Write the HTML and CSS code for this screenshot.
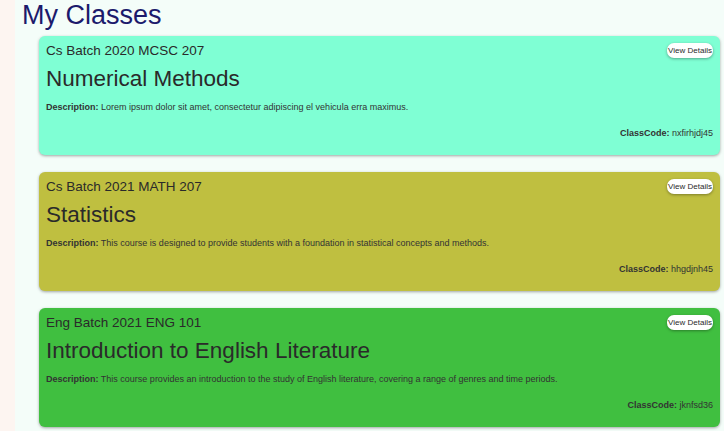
FILE: index.html
```html
<!DOCTYPE html>
<html lang="en">
<head>
<meta charset="utf-8">
<title>My Classes</title>
<link rel="stylesheet" href="styles.css">
</head>
<body>
<main class="main">
  <h1 class="page-title">My Classes</h1>
  <section class="cards">
    <article class="card card-aqua">
      <div class="card-head">
        <div class="card-sub">Cs Batch 2020 MCSC 207</div>
        <button class="btn">View Details</button>
      </div>
      <h2 class="card-title">Numerical Methods</h2>
      <p class="card-desc"><b>Description:</b> Lorem ipsum dolor sit amet, consectetur adipiscing el vehicula erra maximus.</p>
      <p class="card-code"><b>ClassCode:</b> nxfirhjdj45</p>
    </article>
    <article class="card card-olive">
      <div class="card-head">
        <div class="card-sub">Cs Batch 2021 MATH 207</div>
        <button class="btn">View Details</button>
      </div>
      <h2 class="card-title">Statistics</h2>
      <p class="card-desc"><b>Description:</b> This course is designed to provide students with a foundation in statistical concepts and methods.</p>
      <p class="card-code"><b>ClassCode:</b> hhgdjnh45</p>
    </article>
    <article class="card card-green">
      <div class="card-head">
        <div class="card-sub">Eng Batch 2021 ENG 101</div>
        <button class="btn">View Details</button>
      </div>
      <h2 class="card-title">Introduction to English Literature</h2>
      <p class="card-desc"><b>Description:</b> This course provides an introduction to the study of English literature, covering a range of genres and time periods.</p>
      <p class="card-code"><b>ClassCode:</b> jknfsd36</p>
    </article>
  </section>
</main>
</body>
</html>
```

FILE: styles.css
```css
html, body {
  margin: 0;
  padding: 0;
}
body {
  background: #fdf5f1;
  font-family: "Liberation Sans", Arial, sans-serif;
  color: #2a2a2a;
  height: 431px;
  overflow: hidden;
}
.main {
  margin-left: 15px;
  background: #f4fdf9;
  min-height: 431px;
  padding: 0 4px 0 7px;
}
.page-title {
  margin: 0 0 5px 0;
  font-size: 27px;
  line-height: 31px;
  font-weight: normal;
  color: #1c1a6c;
}
.cards {
  display: flex;
  flex-direction: column;
  gap: 17px;
  padding-left: 17px;
}
.card {
  height: 119px;
  box-sizing: border-box;
  border-radius: 6px;
  padding: 7px 7px 0 7px;
  box-shadow: 0 1px 3px rgba(0, 0, 0, 0.35);
  display: flex;
  flex-direction: column;
}
.card-aqua { background: #7fffd4; }
.card-olive { background: #bfbf40; }
.card-green { background: #40bf40; }
.card-head {
  display: flex;
  justify-content: space-between;
  align-items: flex-start;
}
.card-sub {
  font-size: 13.5px;
  line-height: 16px;
  color: #2a2a2a;
}
.btn {
  font-family: "Liberation Sans", Arial, sans-serif;
  font-size: 8px;
  color: #2a2a2a;
  background: #fff;
  border: none;
  border-radius: 7px;
  height: 15px;
  width: 46px;
  padding: 0;
  white-space: nowrap;
  box-shadow: 0 1px 3px rgba(0, 0, 0, 0.35);
}
.card-title {
  margin: 7px 0 0 0;
  font-size: 22.5px;
  line-height: 26px;
  font-weight: normal;
  color: #2a2a2a;
}
.card-desc {
  margin: 10px 0 0 0;
  font-size: 9px;
  line-height: 10px;
  color: #333;
}
.card-code {
  margin: 16px 0 0 0;
  font-size: 9px;
  line-height: 10px;
  text-align: right;
  color: #333;
}
.card-desc b, .card-code b {
  font-weight: bold;
}
```
